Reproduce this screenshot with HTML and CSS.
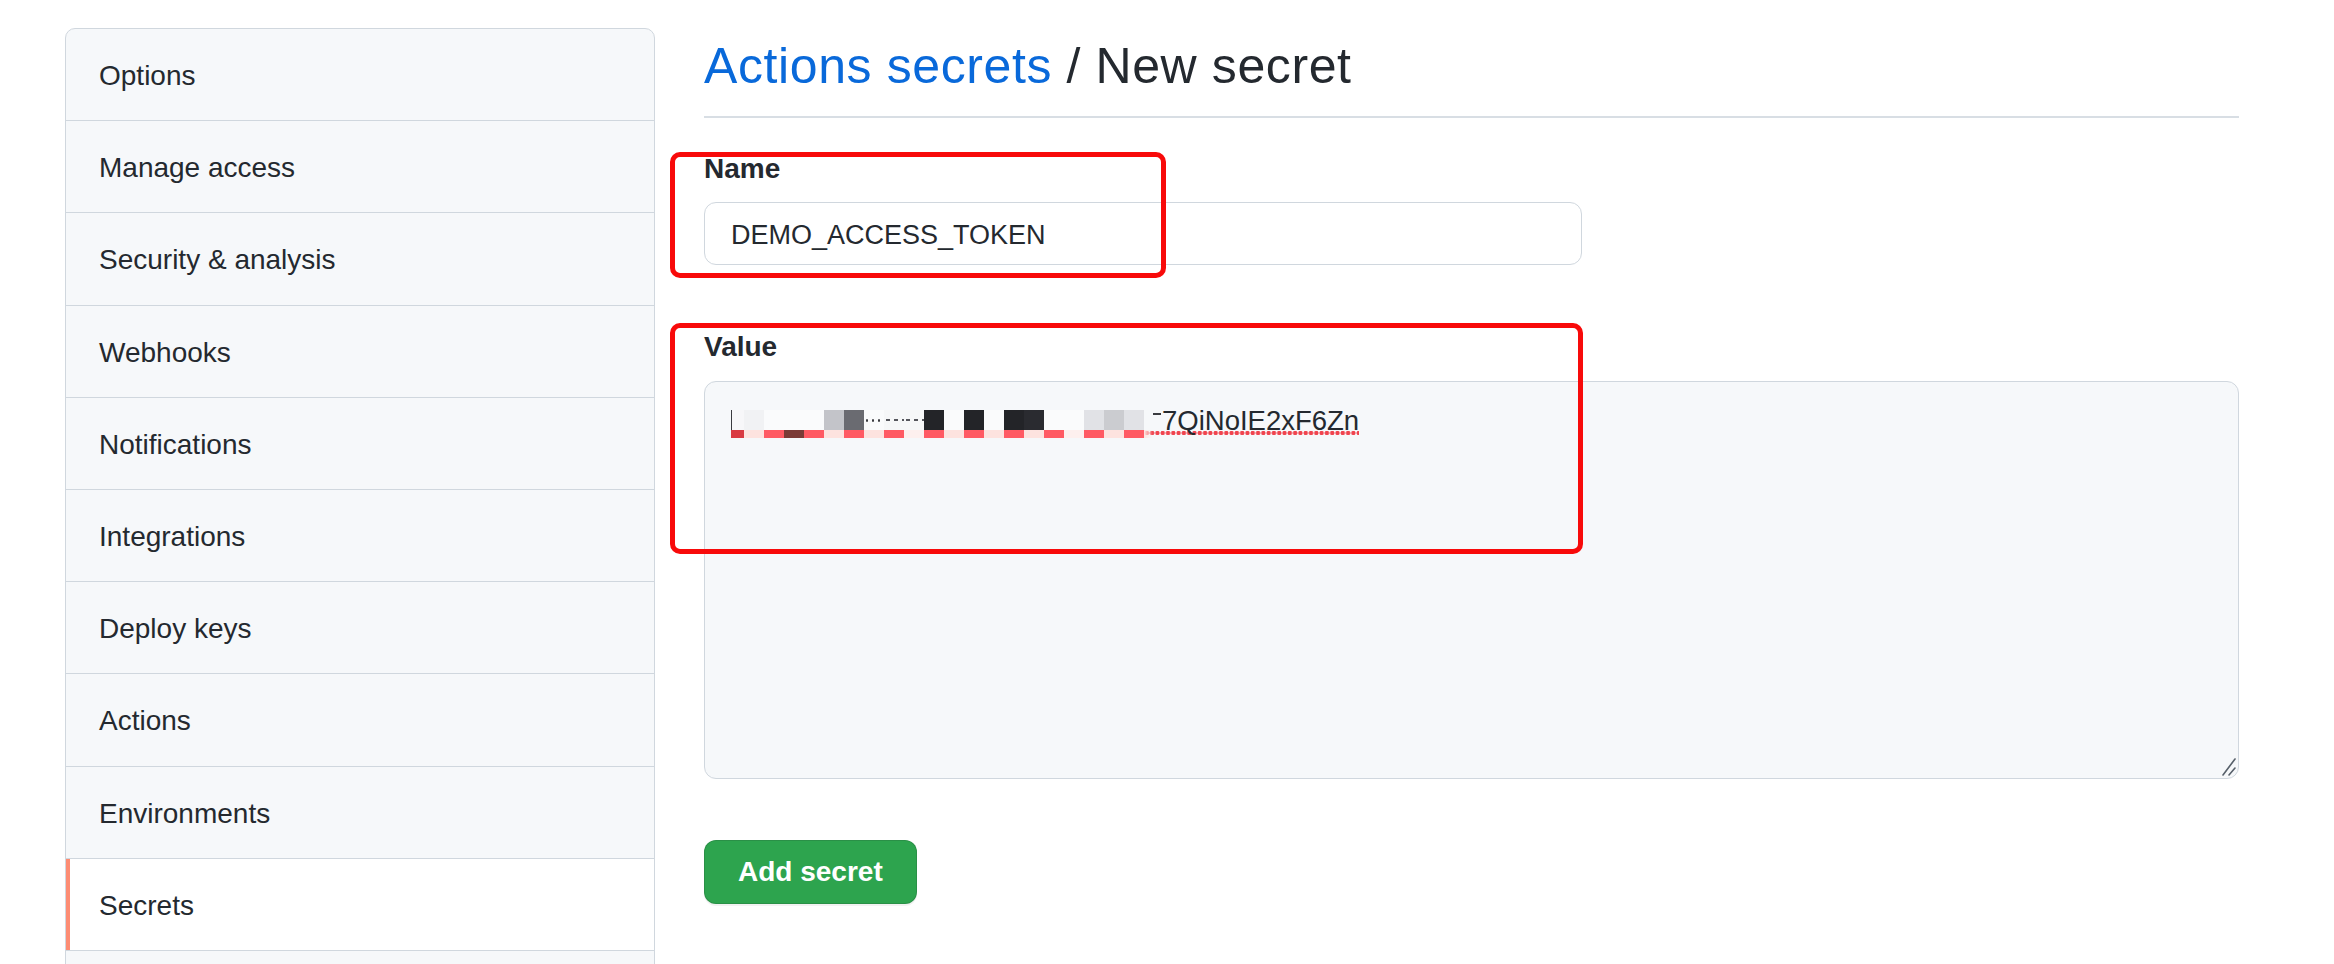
FILE: index.html
```html
<!DOCTYPE html>
<html lang="en">
<head>
<meta charset="utf-8">
<title>Actions secrets / New secret</title>
<link rel="stylesheet" href="styles.css">
</head>
<body>
<div class="page">
  <nav class="menu">
    <a class="menu-item">Options</a>
    <a class="menu-item">Manage access</a>
    <a class="menu-item">Security &amp; analysis</a>
    <a class="menu-item">Webhooks</a>
    <a class="menu-item">Notifications</a>
    <a class="menu-item">Integrations</a>
    <a class="menu-item">Deploy keys</a>
    <a class="menu-item">Actions</a>
    <a class="menu-item">Environments</a>
    <a class="menu-item selected">Secrets</a>
    <a class="menu-item"></a>
  </nav>

  <main class="content">
    <h1 class="subhead"><a class="crumb">Actions secrets</a> / New secret</h1>

    <form class="form">
      <div class="field field-name">
        <label class="label">Name</label>
        <div class="input">DEMO_ACCESS_TOKEN</div>
      </div>

      <div class="field field-value">
        <label class="label">Value</label>
        <div class="textarea">
          <span class="secret"><span class="mosaic"><span class="col c-first"><i class="t w"></i><i class="b dr"></i></span><span class="col"><i class="t l"></i><i class="b p"></i></span><span class="col"><i class="t w"></i><i class="b r"></i></span><span class="col"><i class="t w"></i><i class="b br"></i></span><span class="col"><i class="t w"></i><i class="b r"></i></span><span class="col"><i class="t g1"></i><i class="b p"></i></span><span class="col"><i class="t g2"></i><i class="b r"></i></span><span class="col"><i class="t w dots"></i><i class="b p"></i></span><span class="col"><i class="t w dash"></i><i class="b r"></i></span><span class="col"><i class="t w dash"></i><i class="b p2"></i></span><span class="col"><i class="t k"></i><i class="b r"></i></span><span class="col"><i class="t w"></i><i class="b p"></i></span><span class="col"><i class="t k"></i><i class="b r"></i></span><span class="col"><i class="t w"></i><i class="b p"></i></span><span class="col"><i class="t k"></i><i class="b r"></i></span><span class="col"><i class="t k2"></i><i class="b p"></i></span><span class="col"><i class="t w"></i><i class="b r"></i></span><span class="col"><i class="t w"></i><i class="b p2"></i></span><span class="col"><i class="t g3"></i><i class="b r"></i></span><span class="col"><i class="t g4"></i><i class="b p"></i></span><span class="col"><i class="t g3"></i><i class="b r"></i></span><span class="col c-fade"><i class="t"></i><i class="b fade"></i></span></span><span class="tick"></span>7QiNoIE2xF6Zn</span>
          <svg class="grip" width="16" height="18" viewBox="0 0 16 18" aria-hidden="true">
            <path d="M15 1 L3 17" stroke="#57606a" stroke-width="1.6" stroke-linecap="round" fill="none"/>
            <path d="M15 10 L9 17" stroke="#57606a" stroke-width="1.6" stroke-linecap="round" fill="none"/>
          </svg>
        </div>
      </div>

      <button class="btn-primary" type="button">Add secret</button>
    </form>

    <div class="mark mark-name"></div>
    <div class="mark mark-value"></div>
  </main>
</div>
</body>
</html>
```

FILE: styles.css
```css
* {
  box-sizing: border-box;
}

html,
body {
  margin: 0;
  padding: 0;
  background: #ffffff;
}

body {
  width: 2334px;
  height: 964px;
  overflow: hidden;
  font-family: "Liberation Sans", Arial, sans-serif;
  color: #24292f;
}

.page {
  display: flex;
  align-items: flex-start;
  gap: 49px;
  padding: 28px 0 0 65px;
}

/* ---------- sidebar menu ---------- */
.menu {
  flex: none;
  width: 590px;
  display: flex;
  flex-direction: column;
  background: #f6f8fa;
  border: 1px solid #d0d7de;
  border-radius: 10px;
  overflow: hidden;
}

.menu-item {
  position: relative;
  display: block;
  height: 92.2px;
  padding: 31px 32px 0 33px;
  font-size: 28px;
  line-height: 32px;
  color: #24292f;
  text-decoration: none;
  border-bottom: 1px solid #d0d7de;
}

.menu-item.selected {
  background: #ffffff;
}

.menu-item.selected::before {
  content: "";
  position: absolute;
  left: 0;
  top: 0;
  bottom: 0;
  width: 4px;
  background: #fd8c73;
}

/* ---------- main ---------- */
.content {
  flex: none;
  position: relative;
  width: 1535px;
}

.subhead {
  margin: 6px 0 0;
  padding-bottom: 18px;
  font-size: 50px;
  line-height: 64px;
  font-weight: 400;
  letter-spacing: 0.6px;
  color: #24292f;
  border-bottom: 2px solid #d8dee4;
}

.crumb {
  color: #0969da;
  text-decoration: none;
}

.form {
  display: flex;
  flex-direction: column;
  align-items: flex-start;
}

.field {
  display: flex;
  flex-direction: column;
  align-self: stretch;
}

.field-name {
  margin-top: 33px;
}

.field-value {
  margin-top: 64px;
}

.label {
  display: block;
  font-size: 28px;
  line-height: 36px;
  font-weight: 700;
  margin-bottom: 15px;
}

.field-value .label {
  margin-bottom: 16px;
}

.input {
  width: 878px;
  height: 63px;
  display: flex;
  align-items: center;
  padding: 2px 26px 0;
  font-size: 27px;
  line-height: 36px;
  background: #ffffff;
  border: 1px solid #d0d7de;
  border-radius: 12px;
}

.textarea {
  position: relative;
  width: 1535px;
  height: 398px;
  padding: 21px 26px 0;
  font-size: 27.5px;
  line-height: 36px;
  background: #f6f8fa;
  border: 1px solid #d0d7de;
  border-radius: 12px;
}

.secret {
  background-image: radial-gradient(circle, #f0444e 0, #f0444e 1.9px, rgba(240, 68, 78, 0) 2.5px);
  background-size: 5.3px 6px;
  background-repeat: repeat-x;
  background-position: 0 100%;
}

/* pixelated (masked) part of the secret */
.mosaic {
  display: inline-flex;
  vertical-align: baseline;
  height: 28px;
  margin-bottom: -2px;
}

.col {
  display: flex;
  flex-direction: column;
  width: 20px;
}

.col.c-first {
  width: 13px;
}

.col.c-fade {
  width: 9px;
}

.col .t {
  display: block;
  height: 20px;
}

.col .b {
  display: block;
  height: 8px;
}

.w { background: #fafbfc; }
.l { background: #f1f2f4; }
.g1 { background: #c3c4c9; }
.g2 { background: #6a6b71; }
.g3 { background: #e1e2e6; }
.g4 { background: #cbccd0; }
.k { background: #232428; }
.k2 { background: #2a2b30; }
.r { background: #ff5a63; }
.p { background: #fde3df; }
.p2 { background: #fdf0ee; }
.dr { background: #d93a42; }
.br { background: #7b3b36; }
.fade { background: linear-gradient(90deg, #fde3df, rgba(253, 227, 223, 0)); }

.c-first .t {
  background: linear-gradient(90deg, #3a3b40 0, #3a3b40 1px, #f7f7f9 1px);
}

.dots {
  background: radial-gradient(circle, #3a3b40 0, #3a3b40 1px, rgba(0, 0, 0, 0) 1.4px) 0 9px / 6px 3px repeat-x, #fafbfc;
}

.dash {
  background: linear-gradient(90deg, #55565c 0, #55565c 4px, rgba(0, 0, 0, 0) 4px) 2px 9px / 8px 1.5px repeat-x, #f6f7f8;
}

.tick {
  display: inline-block;
  width: 8px;
  height: 2px;
  margin: 0 1px 0 0;
  vertical-align: 15px;
  background: #3a3b40;
}

.grip {
  position: absolute;
  right: 2px;
  bottom: 2px;
}

.btn-primary {
  margin-top: 61px;
  height: 64px;
  padding: 0 33px;
  font-family: "Liberation Sans", Arial, sans-serif;
  font-size: 28px;
  line-height: 32px;
  font-weight: 700;
  color: #ffffff;
  background: #2da44e;
  border: 1px solid rgba(27, 31, 36, 0.15);
  border-radius: 12px;
  box-shadow: 0 2px 0 rgba(27, 31, 36, 0.06);
}

/* ---------- red annotation boxes ---------- */
.mark {
  position: absolute;
  border: 5px solid #f80a0a;
  border-radius: 10px;
  pointer-events: none;
}

.mark-name {
  left: -34px;
  top: 124px;
  width: 496px;
  height: 126px;
}

.mark-value {
  left: -34px;
  top: 295px;
  width: 913px;
  height: 231px;
}
```
